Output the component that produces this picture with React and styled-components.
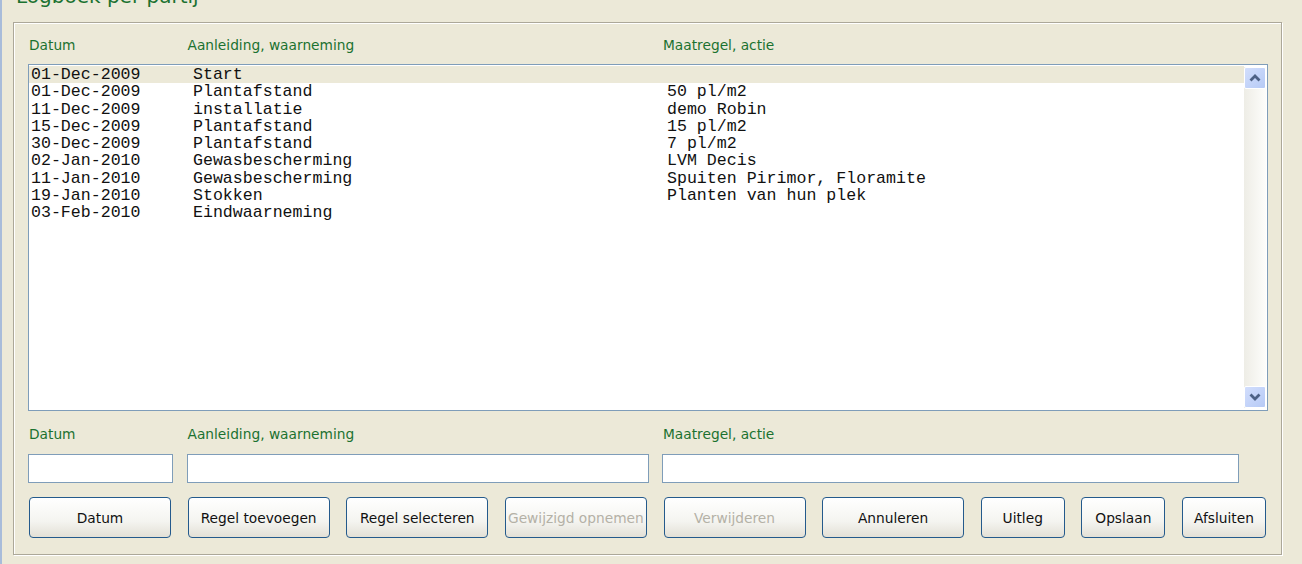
import React from 'react'
import styled, { createGlobalStyle } from 'styled-components'

const GlobalStyle = createGlobalStyle`
    html, body {
        margin: 0;
        padding: 0;
        background: #ECE9D8;
    }
    body {
        font-family: "DejaVu Sans", Verdana, sans-serif;
    }
`

const Window = styled.div`
    width: 1302px;
    height: 564px;
    box-sizing: border-box;
    overflow: hidden;
    background: #ECE9D8;
    border-left: 2px solid #A8BCDA;
    padding-left: 11px;
`

const Title = styled.div`
    margin: -14px 0 0 3px;
    height: 20px;
    font-size: 20px;
    line-height: 20px;
    color: #1B7230;
    white-space: nowrap;
`

const GroupBox = styled.div`
    margin-top: 16px;
    width: 1269px;
    height: 533px;
    box-sizing: border-box;
    border: 1px solid #ACA899;
    box-shadow: inset 1px 1px 0 #fff, 1px 1px 0 #fff;
    padding: 13px 0 0 14px;
    display: flex;
    flex-direction: column;
`

const FieldGrid = styled.div`
    display: grid;
    grid-template-columns: 145px 462px 577px;
    column-gap: 13.5px;
    margin-top: ${p => p.$top || 0}px;
`

const Label = styled.div`
    padding-left: 1px;
    height: 18px;
    font-size: 13.75px;
    line-height: 18px;
    color: #1B7230;
    white-space: nowrap;
`

const ListBox = styled.div`
    margin-top: 10px;
    width: 1240px;
    height: 347px;
    box-sizing: border-box;
    border: 1px solid #7F9DB9;
    background: #fff;
    display: flex;
`

const Rows = styled.div`
    flex: 1;
    padding-top: 1px;
`

const Row = styled.div`
    display: grid;
    grid-template-columns: 162px 474px 1fr;
    padding-left: 2px;
    height: 17.3px;
    font-family: "Liberation Mono", "Courier New", monospace;
    font-size: 16.6px;
    line-height: 17.3px;
    color: #111;
    white-space: pre;
    background: ${p => (p.$selected ? '#ECE9D8' : 'transparent')};
`

const ScrollBar = styled.div`
    width: 22px;
    margin: 2px 1px 2px 0;
    display: flex;
    flex-direction: column;
    justify-content: space-between;
    background: linear-gradient(to right, #EEEDE6, #FDFDFB);
`

const ScrollButton = styled.div`
    width: 22px;
    height: 22px;
    box-sizing: border-box;
    border: 1px solid #fff;
    border-radius: 2px;
    background: linear-gradient(135deg, #D2DEFC, #B6CAF6);
    display: flex;
    align-items: center;
    justify-content: center;
`

const Input = styled.div`
    height: 29px;
    box-sizing: border-box;
    border: 1px solid #7F9DB9;
    background: #fff;
`

const ButtonRow = styled.div`
    margin: 14px 0 0 1px;
    width: 1237px;
    display: flex;
    justify-content: space-between;
`

const Button = styled.button`
    width: ${p => (p.$small ? '84px' : '142px')};
    height: 41px;
    padding: 0;
    border: 1px solid #245A8C;
    border-radius: 4px;
    background: linear-gradient(to bottom, #FFFFFF 0%, #F4F4F0 60%, #E3E0D6 100%);
    font-family: "DejaVu Sans", Verdana, sans-serif;
    font-size: 13.75px;
    color: ${p => (p.disabled ? '#B4B1A6' : '#111')};
    white-space: nowrap;
    overflow: hidden;
`

const entries = [
    ['01-Dec-2009', 'Start', ''],
    ['01-Dec-2009', 'Plantafstand', '50 pl/m2'],
    ['11-Dec-2009', 'installatie', 'demo Robin'],
    ['15-Dec-2009', 'Plantafstand', '15 pl/m2'],
    ['30-Dec-2009', 'Plantafstand', '7 pl/m2'],
    ['02-Jan-2010', 'Gewasbescherming', 'LVM Decis'],
    ['11-Jan-2010', 'Gewasbescherming', 'Spuiten Pirimor, Floramite'],
    ['19-Jan-2010', 'Stokken', 'Planten van hun plek'],
    ['03-Feb-2010', 'Eindwaarneming', ''],
]

const buttons = [
    { label: 'Datum' },
    { label: 'Regel toevoegen' },
    { label: 'Regel selecteren' },
    { label: 'Gewijzigd opnemen', disabled: true },
    { label: 'Verwijderen', disabled: true },
    { label: 'Annuleren' },
    { label: 'Uitleg', small: true },
    { label: 'Opslaan', small: true },
    { label: 'Afsluiten', small: true },
]

function Arrow({ down }) {
    return (
        <svg width="12" height="8" viewBox="0 0 12 8">
            <polyline
                points={down ? '1.5,1.5 6,6 10.5,1.5' : '1.5,6.5 6,2 10.5,6.5'}
                fill="none"
                stroke="#4D6185"
                strokeWidth="2.8"
            />
        </svg>
    )
}

function Headers({ top }) {
    return (
        <FieldGrid $top={top}>
            <Label>Datum</Label>
            <Label>Aanleiding, waarneming</Label>
            <Label>Maatregel, actie</Label>
        </FieldGrid>
    )
}

function App() {
    return (
        <Window>
            <GlobalStyle />
            <Title>Logboek per partij</Title>
            <GroupBox>
                <Headers />
                <ListBox>
                    <Rows>
                        {entries.map((e, i) => (
                            <Row key={i} $selected={i === 0}>
                                <span>{e[0]}</span>
                                <span>{e[1]}</span>
                                <span>{e[2]}</span>
                            </Row>
                        ))}
                    </Rows>
                    <ScrollBar>
                        <ScrollButton><Arrow /></ScrollButton>
                        <ScrollButton><Arrow down /></ScrollButton>
                    </ScrollBar>
                </ListBox>
                <Headers top={14} />
                <FieldGrid $top={11}>
                    <Input />
                    <Input />
                    <Input />
                </FieldGrid>
                <ButtonRow>
                    {buttons.map(b => (
                        <Button key={b.label} $small={b.small} disabled={b.disabled}>
                            {b.label}
                        </Button>
                    ))}
                </ButtonRow>
            </GroupBox>
        </Window>
    )
}

export default App
